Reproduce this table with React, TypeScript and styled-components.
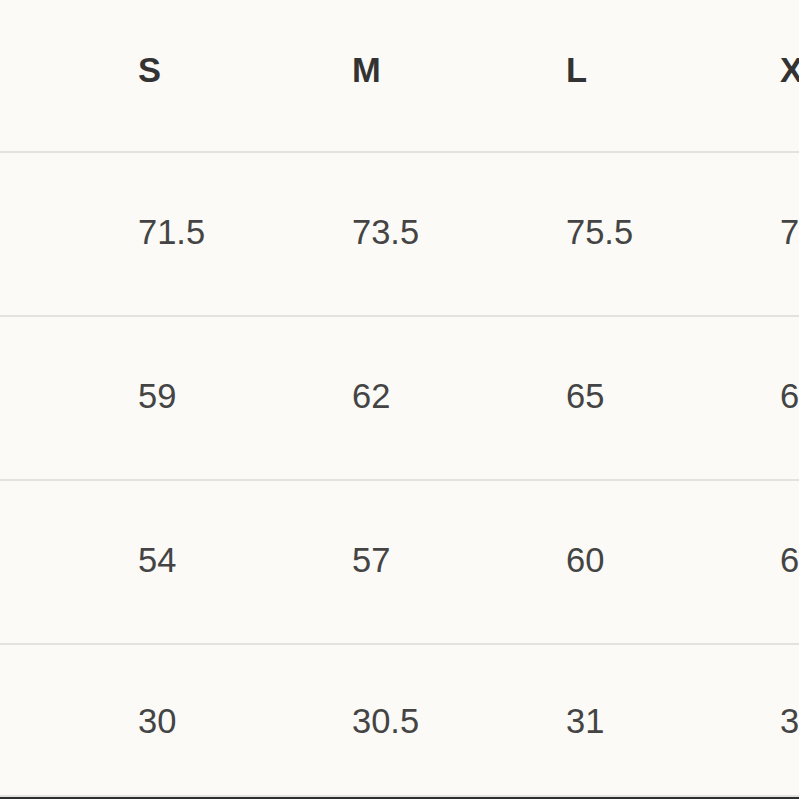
import React from "react";
import styled, { createGlobalStyle } from "styled-components";

const Global = createGlobalStyle`
  html, body { margin: 0; padding: 0; background: #fbfaf6; }
  body { overflow: hidden; }
`;

const Page = styled.div`
  width: 799px;
  height: 799px;
  overflow: hidden;
  background: #fbfaf6;
  font-family: "Liberation Sans", Arial, sans-serif;
  color: #3b3b3b;
  display: flex;
  flex-direction: column;
`;

const Row = styled.div<{ $h: number; $head?: boolean; $shift: number }>`
  display: grid;
  grid-template-columns: 138px 214px 214px 214px 214px;
  align-items: center;
  height: ${(p) => p.$h}px;
  flex: none;
  border-bottom: 2px solid #e3e2de;
  font-size: 34.5px;
  font-weight: ${(p) => (p.$head ? 700 : 400)};
  color: ${(p) => (p.$head ? "#333333" : "#444444")};
  white-space: nowrap;
  padding-bottom: ${(p) => Math.max(0, p.$shift)}px;
  padding-top: ${(p) => Math.max(0, -p.$shift)}px;
  box-sizing: border-box;
`;

const Cell = styled.div`
  line-height: 1;
`;

const BottomEdge = styled.div`
  height: 3px;
  background: #2f2f2f;
  flex: none;
`;

const Fill = styled.div`
  flex: 1;
`;

const head = ["S", "M", "L", "XL"];
const rows = [
  ["71.5", "73.5", "75.5", "77.5"],
  ["59", "62", "65", "68"],
  ["54", "57", "60", "63"],
  ["30", "30.5", "31", "31.5"],
];

export default function App() {
  return (
    <Page>
      <Global />
      <Row $h={153} $head $shift={11}>
        <Cell />
        {head.map((h) => (
          <Cell key={h}>{h}</Cell>
        ))}
      </Row>
      {rows.map((r, i) => (
        <Row key={i} $h={i === 3 ? 152 : 164} $shift={i === 3 ? -2 : 4}>
          <Cell />
          {r.map((v, j) => (
            <Cell key={j}>{v}</Cell>
          ))}
        </Row>
      ))}
      <Fill />
      <BottomEdge />
    </Page>
  );
}
